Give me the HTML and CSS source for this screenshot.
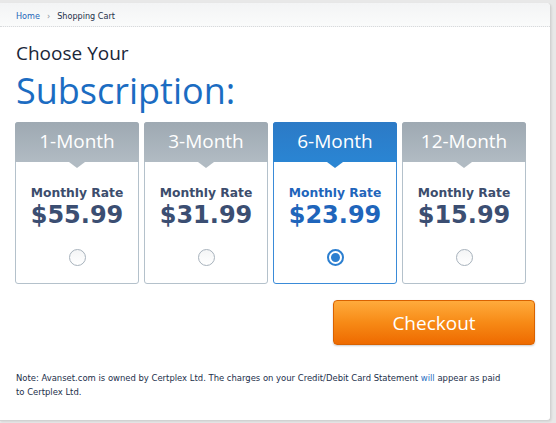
FILE: index.html
```html
<!DOCTYPE html>
<html lang="en">
<head>
    <meta charset="UTF-8">
    <title>Shopping Cart</title>
    <link rel="stylesheet" href="styles.css">
</head>
<body>

    <div class="panel">
        <div class="breadcrumb">
            <a href="#">Home</a>
            <span class="sep">&rsaquo;</span>
            <span class="current">Shopping Cart</span>
        </div>

        <div class="content">
            <h2 class="pre-title">Choose Your</h2>
            <h1 class="title">Subscription:</h1>

            <div class="plans">
                <label class="plan">
                    <div class="plan-head">1-Month</div>
                    <div class="plan-body">
                        <div class="rate">Monthly Rate</div>
                        <div class="price">$55.99</div>
                        <span class="radio"></span>
                    </div>
                </label>
                <label class="plan">
                    <div class="plan-head">3-Month</div>
                    <div class="plan-body">
                        <div class="rate">Monthly Rate</div>
                        <div class="price">$31.99</div>
                        <span class="radio"></span>
                    </div>
                </label>
                <label class="plan selected">
                    <div class="plan-head">6-Month</div>
                    <div class="plan-body">
                        <div class="rate">Monthly Rate</div>
                        <div class="price">$23.99</div>
                        <span class="radio"></span>
                    </div>
                </label>
                <label class="plan">
                    <div class="plan-head">12-Month</div>
                    <div class="plan-body">
                        <div class="rate">Monthly Rate</div>
                        <div class="price">$15.99</div>
                        <span class="radio"></span>
                    </div>
                </label>
            </div>

            <div class="actions">
                <button class="checkout-btn">Checkout</button>
            </div>

            <p class="note">
                Note: Avanset.com is owned by Certplex Ltd. The charges on your Credit/Debit Card Statement <span class="hl">will</span> appear as paid to Certplex Ltd.
            </p>
        </div>
    </div>

</body>
</html>
```

FILE: styles.css
```css
* {
    margin: 0;
    padding: 0;
    box-sizing: border-box;
}

body {
    background-color: #e8e8e8;
    font-family: 'DejaVu Sans', sans-serif;
    width: 556px;
    height: 423px;
    overflow: hidden;
}

.panel {
    width: 551px;
    height: 418px;
    margin-top: 3px;
    background-color: #fff;
    border-right: 1px solid #d2d2d2;
    border-bottom: 1px solid #d2d2d2;
    border-radius: 0 4px 4px 0;
    box-shadow: 1px 1px 2px rgba(0, 0, 0, 0.08);
}

.breadcrumb {
    height: 24px;
    padding: 2px 16px 0 16px;
    display: flex;
    align-items: center;
    font-family: 'DejaVu Sans Condensed', 'DejaVu Sans', sans-serif;
    font-stretch: condensed;
    font-size: 9px;
    background: linear-gradient(#f3f4f5, #fafbfb);
    border-bottom: 1px dotted #d8dadc;
    border-radius: 0 4px 0 0;
}

.breadcrumb a {
    color: #2366b8;
    text-decoration: none;
}

.breadcrumb .sep {
    color: #8a8f96;
    margin: 0 7px;
}

.breadcrumb .current {
    color: #1d2f48;
}

.content {
    padding: 13px 15px 0 15px;
}

.pre-title {
    font-family: 'Open Sans', sans-serif;
    font-weight: 400;
    font-size: 19px;
    line-height: 26px;
    color: #1a2638;
    padding-left: 1px;
}

.title {
    font-family: 'Open Sans', sans-serif;
    font-weight: 400;
    font-size: 36px;
    line-height: 49px;
    color: #1b6cc2;
    padding-left: 1px;
    margin-bottom: 7px;
}

.plans {
    display: flex;
    gap: 5px;
}

.plan {
    width: 124px;
    height: 162px;
    border: 1px solid #b4c1cb;
    border-radius: 3px;
    background-color: #fff;
    display: flex;
    flex-direction: column;
    cursor: pointer;
}

.plan-head {
    position: relative;
    height: 40px;
    margin: -1px -1px 0 -1px;
    border-radius: 3px 3px 0 0;
    background: linear-gradient(#9ea9b2, #b1bbc3);
    color: #fff;
    font-family: 'Open Sans', sans-serif;
    font-size: 19px;
    text-align: center;
    line-height: 38px;
}

.plan-head::after {
    content: '';
    position: absolute;
    left: 50%;
    bottom: -6px;
    margin-left: -8px;
    border-left: 8px solid transparent;
    border-right: 8px solid transparent;
    border-top: 6px solid #b1bbc3;
}

.plan-body {
    flex: 1;
    display: flex;
    flex-direction: column;
    align-items: center;
    padding-top: 23px;
}

.rate {
    font-size: 12.3px;
    font-weight: 700;
    color: #3c4d6d;
    line-height: 16px;
}

.price {
    font-size: 24px;
    font-weight: 700;
    color: #3b4e72;
    line-height: 28px;
}

.radio {
    margin-top: 20px;
    width: 17px;
    height: 17px;
    border: 1.5px solid #a7b2bc;
    border-radius: 50%;
    background: linear-gradient(#f4f5f6, #fff);
    display: flex;
    align-items: center;
    justify-content: center;
}

.plan.selected {
    border-color: #3a8bd8;
}

.plan.selected .plan-head {
    background: linear-gradient(#2c7ac6, #2a85d3);
}

.plan.selected .plan-head::after {
    border-top-color: #2a85d3;
}

.plan.selected .rate,
.plan.selected .price {
    color: #1f65bb;
}

.plan.selected .radio {
    border: 2px solid #2c7fd0;
    background: #fff;
}

.plan.selected .radio::after {
    content: '';
    width: 9px;
    height: 9px;
    border-radius: 50%;
    background-color: #2c7fd0;
}

.actions {
    display: flex;
    justify-content: flex-end;
    margin-top: 16px;
}

.checkout-btn {
    width: 202px;
    height: 45px;
    border: 1px solid #d96200;
    border-radius: 4px;
    background: linear-gradient(#ffab3c, #f78a16 50%, #ee6a00);
    color: #fff;
    font-family: 'Open Sans', sans-serif;
    font-size: 19px;
    cursor: pointer;
    box-shadow: 0 1px 2px rgba(0, 0, 0, 0.2);
}

.note {
    width: 492px;
    margin-top: 26px;
    font-family: 'DejaVu Sans Condensed', 'DejaVu Sans', sans-serif;
    font-stretch: condensed;
    font-size: 9.4px;
    line-height: 14px;
    color: #1b2f4a;
    padding-left: 1px;
}

.note .hl {
    color: #2a6fc2;
}
```
